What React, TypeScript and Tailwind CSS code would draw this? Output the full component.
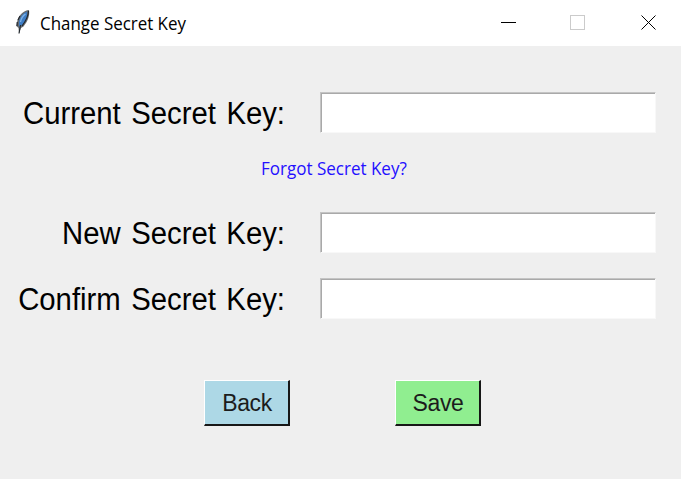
import React from "react";

function Feather() {
  return (
    <svg width="18" height="26" viewBox="0 0 18 26" className="block">
      <path d="M15 1 C10 1.5 5 6 3.5 11 L2.3 17 L4.5 19 L5 24.5 L7 19 L9.5 17.5 C13.5 12.5 16 7 15 1Z" fill="#666b70" />
      <path d="M13 2.5 C8.5 4.5 6 8 5 12.5 L5 17.5 L8.5 16 C12 11.5 14 7.5 13 2.5Z" fill="#3d7cc4" />
      <path d="M11.5 5 C8.5 7 7 10 6.5 13" stroke="#7fb2e6" strokeWidth="1.4" fill="none" />
      <path d="M14.5 2 C14.5 8 11 13 8 17 M6.5 16 L5 24.5 M3.2 13 L3 17 M4 11 L6 7" stroke="#20252b" strokeWidth="1.1" fill="none" />
    </svg>
  );
}

function Field({ label, top }: { label: string; top: string }) {
  return (
    <label className={`flex h-[41px] ${top}`}>
      <span className="flex w-[285px] shrink-0 origin-right scale-x-[.945] justify-end whitespace-nowrap text-[31px] leading-[43px] [word-spacing:2.5px]">{label}</span>
      <input
        aria-label={label}
        className="ml-[35px] block h-[41px] w-[336px] border border-t-[#c4c4c4] border-r-[#f8f8f8] border-b-[#f8f8f8] border-l-[#c4c4c4] bg-white px-1 text-2xl shadow-[inset_1px_1px_0_#a9a9a9] outline-none"
      />
    </label>
  );
}

function PushButton({ children, color }: { children: string; color: string }) {
  return (
    <button className={`h-[46px] w-[86px] border-t border-r-2 border-b-2 border-l border-t-white border-r-[#171717] border-b-[#171717] border-l-white pl-px text-[23px] leading-[42px] tracking-[-0.4px] text-[#1c1c1c] ${color}`}>
      {children}
    </button>
  );
}

export default function App() {
  return (
    <div className="flex h-[479px] w-[681px] flex-col overflow-hidden bg-[#efefef] font-['Liberation_Sans',sans-serif] text-black">
      <header className="flex h-[46px] shrink-0 bg-white">
        <div className="ml-[14px] mt-[9px] w-[26px]"><Feather /></div>
        <h1 className="origin-left scale-x-[.94] whitespace-nowrap font-['Open_Sans',sans-serif] text-[18px] leading-[47px]">Change Secret Key</h1>
        <svg width="160" height="16" viewBox="0 0 160 16" className="ml-auto mr-[20px] mt-[15px]" fill="none" shapeRendering="crispEdges">
          <path d="M0 7.5H15" stroke="#000" />
          <rect x="69.5" y="0.5" width="14" height="14" stroke="#cbcbcb" />
          <path d="M140.5 0.5L154.5 14.5M154.5 0.5L140.5 14.5" stroke="#000" shapeRendering="auto" />
        </svg>
      </header>
      <main>
        <Field label="Current Secret Key:" top="mt-[46px]" />
        <a className="ml-[261px] mt-[22px] block h-[26px] w-[160px] origin-left scale-x-[.945] whitespace-nowrap font-['Open_Sans',sans-serif] text-[18px] leading-[26px] text-[#2410ff]">Forgot Secret Key?</a>
        <Field label="New Secret Key:" top="mt-[31px]" />
        <Field label="Confirm Secret Key:" top="mt-[25px]" />
        <div className="ml-[204px] mt-[61px] flex gap-[105px]">
          <PushButton color="bg-[#add8e6]">Back</PushButton>
          <PushButton color="bg-[#90ee90]">Save</PushButton>
        </div>
      </main>
    </div>
  );
}
